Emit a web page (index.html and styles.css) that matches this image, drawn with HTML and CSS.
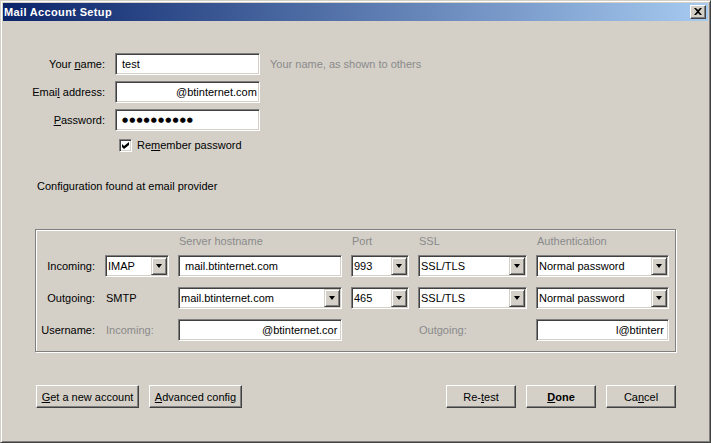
FILE: index.html
```html
<!DOCTYPE html>
<html>
<head>
<meta charset="utf-8">
<title>Mail Account Setup</title>
<link rel="stylesheet" href="styles.css">
</head>
<body>
<div class="window">
  <div class="titlebar">
    <span class="title">Mail Account Setup</span>
    <span class="closebtn"><svg width="8" height="7" viewBox="0 0 8 7"><path d="M0 0h2l2 2 2-2h2L5 3.5 8 7H6L4 5 2 7H0l3-3.5z" fill="#000"/></svg></span>
  </div>
  <div class="content">
    <div class="idform">
      <label class="lbl">Your <u>n</u>ame:</label>
      <div class="field"><span>test</span></div>
      <span class="hint">Your name, as shown to others</span>

      <label class="lbl">Emai<u>l</u> address:</label>
      <div class="field"><span class="shift-email">@btinternet.com</span></div>
      <span></span>

      <label class="lbl"><u>P</u>assword:</label>
      <div class="field"><span class="dots">●●●●●●●●●●</span></div>
      <span></span>

      <div class="checkrow">
        <span class="checkbox"><svg width="7" height="7" viewBox="0 0 7 7"><path d="M0 2l2 2 5-4v3l-5 4-2-2z" fill="#000"/></svg></span>
        <span class="checklbl">Re<u>m</u>ember password</span>
      </div>
    </div>

    <div class="status">Configuration found at email provider</div>

    <div class="group">
      <div class="grow ghead">
        <span></span>
        <span></span>
        <span class="colhead">Server hostname</span>
        <span class="colhead">Port</span>
        <span class="colhead">SSL</span>
        <span class="colhead">Authentication</span>
      </div>
      <div class="grow">
        <span class="glbl">Incoming:</span>
        <div class="combo"><span class="ctext">IMAP</span><span class="arrow"></span></div>
        <div class="field"><span>mail.btinternet.com</span></div>
        <div class="combo"><span class="ctext">993</span><span class="arrow"></span></div>
        <div class="combo"><span class="ctext">SSL/TLS</span><span class="arrow"></span></div>
        <div class="combo"><span class="ctext">Normal password</span><span class="arrow"></span></div>
      </div>
      <div class="grow">
        <span class="glbl">Outgoing:</span>
        <span class="plain">SMTP</span>
        <div class="combo"><span class="ctext">mail.btinternet.com</span><span class="arrow"></span></div>
        <div class="combo"><span class="ctext">465</span><span class="arrow"></span></div>
        <div class="combo"><span class="ctext">SSL/TLS</span><span class="arrow"></span></div>
        <div class="combo"><span class="ctext">Normal password</span><span class="arrow"></span></div>
      </div>
      <div class="grow">
        <span class="glbl">Username:</span>
        <span class="muted">Incoming:</span>
        <div class="field"><span class="shift-in">@btinternet.cor</span></div>
        <span></span>
        <span class="muted">Outgoing:</span>
        <div class="field"><span class="shift-out">l@btinterr</span></div>
      </div>
    </div>

    <div class="btnrow">
      <div class="btngroup">
        <button class="btn w-new"><u>G</u>et a new account</button>
        <button class="btn w-adv"><u>A</u>dvanced config</button>
      </div>
      <div class="btngroup right">
        <button class="btn w-std">Re-<u>t</u>est</button>
        <button class="btn w-std bold"><u>D</u>one</button>
        <button class="btn w-std">Ca<u>n</u>cel</button>
      </div>
    </div>
  </div>
</div>
</body>
</html>
```
FILE: styles.css
```css
html, body {
  margin: 0;
  padding: 0;
  background: #d4d0c8;
}
body {
  font-family: "Liberation Sans", Arial, sans-serif;
  font-size: 11px;
  line-height: 13px;
  color: #000;
}
u { text-decoration: underline; text-underline-offset: 1px; }

.window {
  width: 711px;
  height: 443px;
  box-sizing: border-box;
  border: 1px solid;
  border-color: #d4d0c8 #404040 #404040 #d4d0c8;
  box-shadow: inset 1px 1px #fff, inset -1px -1px #808080;
  padding: 2px;
  display: flex;
  flex-direction: column;
  background: #d4d0c8;
}

.titlebar {
  height: 18px;
  background: linear-gradient(to right, #0a246a, #a6caf0);
  display: flex;
  align-items: center;
  justify-content: space-between;
  padding: 0 2px 0 1px;
}
.title {
  color: #fff;
  font-weight: bold;
  font-size: 11px;
  letter-spacing: 0.35px;
}
.closebtn {
  width: 16px;
  height: 14px;
  box-sizing: border-box;
  background: #d4d0c8;
  border: 1px solid;
  border-color: #fff #404040 #404040 #fff;
  box-shadow: inset -1px -1px #808080;
  display: flex;
  align-items: center;
  justify-content: center;
  padding: 0 1px 1px 0;
}
.closebtn svg { display: block; }

.content {
  flex: 1;
  padding: 32px 32px 0 32px;
  display: flex;
  flex-direction: column;
}

.idform {
  display: grid;
  grid-template-columns: 76px 145px auto;
  column-gap: 10px;
  row-gap: 6px;
  align-items: center;
  margin-left: -6px;
}
.lbl { text-align: right; white-space: nowrap; }
.hint { color: #8a8a8a; }

.field {
  height: 22px;
  box-sizing: border-box;
  background: #fff;
  border: 1px solid;
  border-color: #808080 #fff #fff #808080;
  box-shadow: inset 1px 1px #404040, inset -1px -1px #d4d0c8;
  padding: 0 2px 0 6px;
  display: flex;
  align-items: center;
  white-space: nowrap;
  overflow: hidden;
}
.shift-email { margin-left: 54px; }
.shift-in { margin-left: 77px; }
.shift-out { margin-left: 73px; }
.dots {
  font-family: "DejaVu Sans", sans-serif;
  font-size: 7px;
  letter-spacing: 1.1px;
}

.checkrow {
  grid-column: 2 / 4;
  height: 17px;
  display: flex;
  align-items: center;
  padding-left: 4px;
}
.checkbox {
  width: 13px;
  height: 13px;
  box-sizing: border-box;
  background: #fff;
  border: 1px solid;
  border-color: #808080 #fff #fff #808080;
  box-shadow: inset 1px 1px #404040, inset -1px -1px #d4d0c8;
  display: flex;
  align-items: center;
  justify-content: center;
}
.checkbox svg { display: block; }
.checklbl { margin-left: 5px; }

.status {
  margin-top: 26px;
  padding-left: 2px;
}

.group {
  margin-top: 36px;
  border: 1px solid #808080;
  box-shadow: inset 1px 1px #fff, 1px 1px #fff;
  padding: 5px 0 10px 2px;
}
.grow {
  display: grid;
  grid-template-columns: 58px 64px 164px 58px 109px 133px;
  column-gap: 9px;
  align-items: center;
  height: 22px;
}
.grow + .grow { margin-top: 10px; }
.ghead { height: 13px; }
.grow.ghead + .grow { margin-top: 7px; }
.colhead { color: #8a8a8a; padding-left: 1px; }
.glbl { text-align: right; padding-right: 1px; }
.muted { color: #8a8a8a; padding-left: 1px; }
.plain { padding-left: 1px; }

.combo {
  height: 22px;
  box-sizing: border-box;
  background: #fff;
  border: 1px solid;
  border-color: #808080 #fff #fff #808080;
  box-shadow: inset 1px 1px #404040, inset -1px -1px #d4d0c8;
  padding: 1px;
  display: flex;
  align-items: stretch;
}
.ctext {
  flex: 1;
  display: flex;
  align-items: center;
  padding-left: 1px;
  white-space: nowrap;
  overflow: hidden;
}
.arrow {
  width: 16px;
  box-sizing: border-box;
  background: #d4d0c8;
  border: 1px solid;
  border-color: #d4d0c8 #404040 #404040 #d4d0c8;
  box-shadow: inset 1px 1px #fff, inset -1px -1px #808080;
  display: flex;
  align-items: center;
  justify-content: center;
}
.arrow::after {
  content: "";
  width: 0;
  height: 0;
  border-left: 3.5px solid transparent;
  border-right: 3.5px solid transparent;
  border-top: 4px solid #000;
}

.btnrow {
  margin-top: 33px;
  display: flex;
  justify-content: space-between;
  padding-left: 1px;
}
.btngroup {
  display: flex;
  gap: 10px;
}
.btn {
  height: 23px;
  box-sizing: border-box;
  background: #d4d0c8;
  border: 1px solid;
  border-color: #fff #404040 #404040 #fff;
  box-shadow: inset -1px -1px #808080;
  font-family: "Liberation Sans", Arial, sans-serif;
  font-size: 11px;
  color: #000;
  padding: 0;
  margin: 0;
}
.w-new { width: 103px; }
.w-adv { width: 93px; }
.w-std { width: 70px; }
.bold { font-weight: bold; }
```
